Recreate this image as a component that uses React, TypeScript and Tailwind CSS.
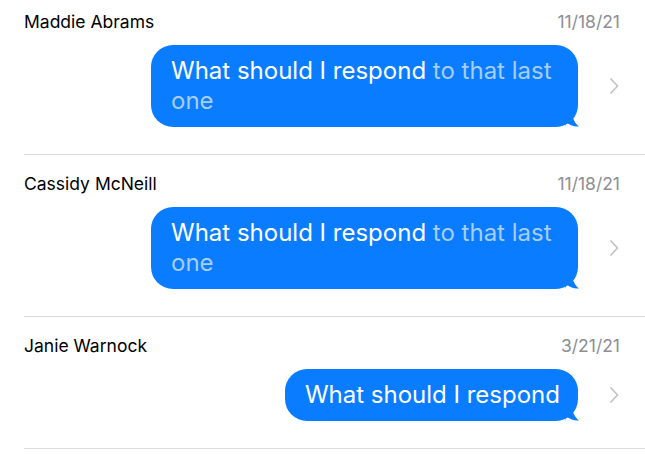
import React from "react";

interface Thread {
  name: string;
  date: string;
  sent: string;
  pending?: string;
}

const threads: Thread[] = [
  { name: "Maddie Abrams", date: "11/18/21", sent: "What should I respond", pending: "to that last one" },
  { name: "Cassidy McNeill", date: "11/18/21", sent: "What should I respond", pending: "to that last one" },
  { name: "Janie Warnock", date: "3/21/21", sent: "What should I respond" },
];

function Tail() {
  return (
    <svg
      className="absolute -right-[7px] bottom-0"
      width="20"
      height="22"
      viewBox="0 0 20 22"
      fill="#0a7cff"
    >
      <path d="M0 0 H6 C6 10 9 18 14 21.5 C9 22 4 20 1 17 L0 22 Z" />
    </svg>
  );
}

function Row({ t, first }: { t: Thread; first?: boolean }) {
  return (
    <div className={`ml-6 border-b border-[#dcdcdf] pb-[27px] ${first ? "pt-[11px]" : "pt-[18px]"}`}>
      <div className="flex items-center justify-between pr-[25px] h-[22px]">
        <span className="text-[17.5px] text-black">{t.name}</span>
        <span className="text-[17.5px] text-[#8e8e93]">{t.date}</span>
      </div>
      <div className="flex items-center justify-end mt-[12px]">
        <div className="relative max-w-[427px]">
          <div className="relative z-10 bg-[#0a7cff] rounded-[22px] pl-[20px] pr-[18px] pt-[11px] pb-[11px] text-[24px] leading-[30px]">
            <span className="text-white">{t.sent}</span>
            {t.pending && <span className="text-[#a7cdf9]"> {t.pending}</span>}
          </div>
          <Tail />
        </div>
        <div className="w-[67px] flex justify-center pl-[4px]">
          <svg width="10" height="18" viewBox="0 0 10 18" fill="none">
            <path d="M2 2 L8.5 9 L2 16" stroke="#c4c4c7" strokeWidth="1.8" strokeLinecap="round" strokeLinejoin="round" />
          </svg>
        </div>
      </div>
    </div>
  );
}

export default function App() {
  return (
    <div className="w-[645px] h-[460px] overflow-hidden bg-white" style={{ fontFamily: "Inter, 'Noto Sans', sans-serif" }}>
      {threads.map((t, i) => (
        <Row key={t.name} t={t} first={i === 0} />
      ))}
    </div>
  );
}
